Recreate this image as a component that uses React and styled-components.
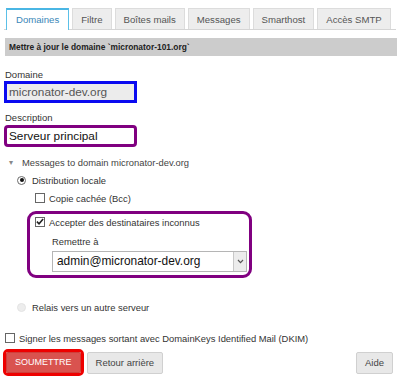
import styled, { createGlobalStyle, css } from "styled-components";

const GlobalStyle = createGlobalStyle`
  html, body {
    margin: 0;
    padding: 0;
    background: #ffffff;
    font-family: "Liberation Sans", Arial, sans-serif;
    color: #333;
  }
`;

const TABS = ["Domaines", "Filtre", "Boîtes mails", "Messages", "Smarthost", "Accès SMTP"];

function App() {
  return (
    <Page>
      <GlobalStyle />
      <TabBar>
        {TABS.map((t, i) => (
          <Tab key={t} $active={i === 0}>
            {t}
          </Tab>
        ))}
      </TabBar>
      <Header>Mettre à jour le domaine `micronator-101.org`</Header>

      <Label $gap={12}>Domaine</Label>
      <TextBox $readonly $ring="#0a0af0">micronator-dev.org</TextBox>

      <Label $gap={8}>Description</Label>
      <TextBox $ring="#800080" $round $gap={1}>Serveur principal</TextBox>

      <Section>
        <Caret>▾</Caret>
        Messages to domain micronator-dev.org
      </Section>

      <OptionRow $indent={13} $gap={6}>
        <Radio $checked />
        Distribution locale
      </OptionRow>

      <OptionRow $indent={31}>
        <Check />
        Copie cachée (Bcc)
      </OptionRow>

      <Highlight>
        <OptionRow $indent={0} $space={1}>
          <Check>
            <svg width="9" height="9" viewBox="0 0 9 9">
              <path d="M1 4.6 L3.4 7 L8 1.6" fill="none" stroke="#222" strokeWidth="1.8" />
            </svg>
          </Check>
          Accepter des destinataires inconnus
        </OptionRow>
        <SubLabel>Remettre à</SubLabel>
        <Select>
          <SelectText>admin@micronator-dev.org</SelectText>
          <SelectButton>
            <svg width="7" height="5" viewBox="0 0 7 5">
              <path d="M1 1 L3.5 3.6 L6 1" fill="none" stroke="#555" strokeWidth="1.2" />
            </svg>
          </SelectButton>
        </Select>
      </Highlight>

      <OptionRow $indent={13} $gap={6} $space={22}>
        <Radio $disabled />
        Relais vers un autre serveur
      </OptionRow>

      <OptionRow $indent={1} $space={17}>
        <Check />
        Signer les messages sortant avec DomainKeys Identified Mail (DKIM)
      </OptionRow>

      <Actions>
        <SubmitRing>
          <Button $primary>SOUMETTRE</Button>
        </SubmitRing>
        <Button>Retour arrière</Button>
        <Spacer />
        <Button>Aide</Button>
      </Actions>
    </Page>
  );
}

const Page = styled.div`
  width: 400px;
  height: 381px;
  padding: 8px 4px 0 4px;
  box-sizing: border-box;
  overflow: hidden;
`;

const TabBar = styled.div`
  display: flex;
  gap: 3px;
  padding-left: 2px;
  width: 392px;
  height: 22px;
  border-bottom: 1px solid #d5d5d5;
  box-sizing: border-box;
`;

const Tab = styled.div`
  flex: none;
  height: 21px;
  line-height: 21px;
  padding: 0 8px;
  font-size: 9.6px;
  color: #555;
  background: #ededed;
  border: 1px solid #dcdcdc;
  border-bottom: none;
  box-sizing: border-box;
  ${(p) =>
    p.$active &&
    css`
      background: #ffffff;
      color: #3a87b8;
      border-color: #5bc0e8;
      border-top: 2px solid #4ab6e4;
      height: 22px;
      line-height: 19px;
      padding: 0 9px;
    `}
`;

const Header = styled.div`
  margin-top: 8px;
  width: 392px;
  margin-left: 1px;
  height: 18px;
  line-height: 18px;
  background: #cccccc;
  font-size: 8.4px;
  font-weight: bold;
  color: #222;
  padding-left: 4px;
  box-sizing: border-box;
`;

const Label = styled.div`
  font-size: 9.5px;
  color: #333;
  margin-top: ${(p) => p.$gap}px;
  margin-left: 1px;
  line-height: 13px;
`;

const TextBox = styled.div`
  width: 133px;
  height: 22px;
  margin-top: ${(p) => p.$gap ?? 0}px;
  box-sizing: border-box;
  border: 3px solid ${(p) => p.$ring};
  border-radius: ${(p) => (p.$round ? "4px" : "0")};
  background: ${(p) => (p.$readonly ? "#ececec" : "#ffffff")};
  color: ${(p) => (p.$readonly ? "#555" : "#111")};
  font-size: 11.8px;
  line-height: 16px;
  padding-left: 2px;
  white-space: nowrap;
`;

const Section = styled.div`
  margin-top: 8px;
  font-size: 9.4px;
  color: #444;
  display: flex;
  align-items: center;
  padding-left: 5px;
  height: 14px;
`;

const Caret = styled.span`
  font-size: 8px;
  color: #888;
  width: 13px;
`;

const OptionRow = styled.div`
  display: flex;
  align-items: center;
  gap: ${(p) => p.$gap ?? 4}px;
  font-size: 9.4px;
  color: #333;
  padding-left: ${(p) => p.$indent}px;
  margin-top: ${(p) => p.$space ?? 4}px;
  height: 14px;
  white-space: nowrap;
`;

const Radio = styled.span`
  flex: none;
  width: 9px;
  height: 9px;
  border-radius: 50%;
  box-sizing: border-box;
  border: 1px solid ${(p) => (p.$disabled ? "#e4e4e4" : "#6a6a6a")};
  background: ${(p) => (p.$disabled ? "#ededed" : "#fff")};
  position: relative;
  ${(p) =>
    p.$checked &&
    css`
      &::after {
        content: "";
        position: absolute;
        left: 1.5px;
        top: 1.5px;
        width: 4px;
        height: 4px;
        border-radius: 50%;
        background: #111;
      }
    `}
`;

const Check = styled.span`
  flex: none;
  width: 10px;
  height: 10px;
  box-sizing: border-box;
  border: 1px solid #666;
  background: #fff;
  display: flex;
  align-items: center;
  justify-content: center;
  svg {
    margin-top: -1px;
  }
`;

const Highlight = styled.div`
  margin-top: 6px;
  margin-left: 23px;
  width: 225px;
  height: 67px;
  box-sizing: border-box;
  border: 3px solid #800080;
  border-radius: 9px;
  padding: 0 0 0 5px;
`;

const SubLabel = styled.div`
  font-size: 9.4px;
  color: #333;
  margin: 6px 0 0 17px;
  line-height: 14px;
`;

const Select = styled.div`
  margin: 2px 0 0 17px;
  width: 195px;
  height: 21px;
  box-sizing: border-box;
  border: 1px solid #b5b5b5;
  display: flex;
  background: #fff;
`;

const SelectText = styled.div`
  flex: 1;
  font-size: 11.9px;
  color: #111;
  line-height: 19px;
  padding-left: 4px;
  white-space: nowrap;
`;

const SelectButton = styled.div`
  width: 12px;
  border-left: 1px solid #c8c8c8;
  background: #ececec;
  display: flex;
  align-items: center;
  justify-content: center;
`;

const Actions = styled.div`
  display: flex;
  align-items: center;
  gap: 3px;
  margin-top: 4px;
  width: 389px;
`;

const SubmitRing = styled.div`
  border: 3px solid #ee0000;
  border-radius: 5px;
  margin-left: -1px;
  display: flex;
`;

const Button = styled.div`
  height: 22px;
  line-height: 20px;
  box-sizing: border-box;
  padding: 0 8px;
  font-size: 9.5px;
  border-radius: 2px;
  border: 1px solid ${(p) => (p.$primary ? "#cf3f3a" : "#d0d0d0")};
  background: ${(p) => (p.$primary ? "#d9534f" : "#e8e8e8")};
  color: ${(p) => (p.$primary ? "#ffffff" : "#444")};
  white-space: nowrap;
  ${(p) =>
    p.$primary &&
    css`
      height: 21px;
      line-height: 19px;
      font-size: 9px;
    `}
`;

const Spacer = styled.div`
  flex: 1;
`;

export default App;
